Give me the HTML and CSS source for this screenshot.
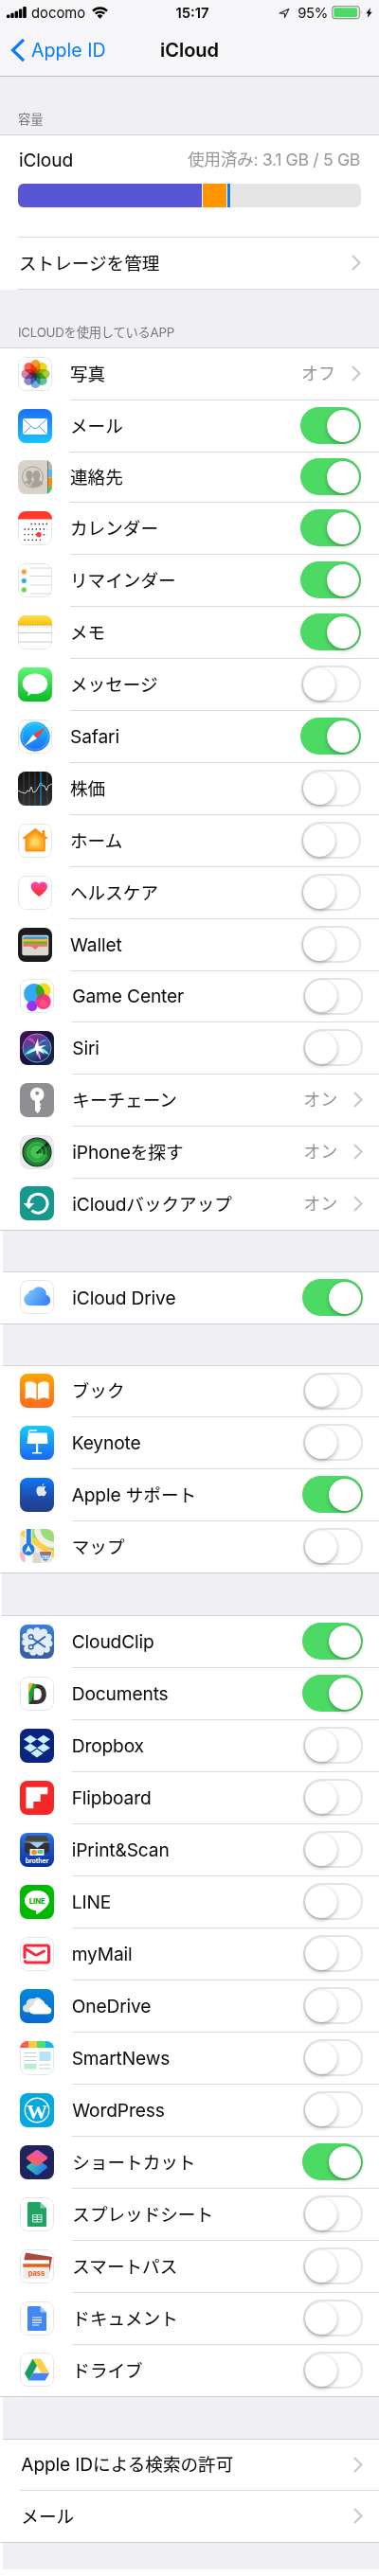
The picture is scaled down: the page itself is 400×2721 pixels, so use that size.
FILE: index.html
```html
<!DOCTYPE html>
<html lang="ja">
<head>
<meta charset="utf-8">
<title>iCloud</title>
<link rel="stylesheet" href="styles.css">
</head>
<body>
<svg class="defs" width="0" height="0">
  <defs>
    <linearGradient id="gMail" x2="0" y2="1"><stop stop-color="#1d6ff2"/><stop offset="1" stop-color="#19c5fb"/></linearGradient>
    <linearGradient id="gMsg" x2="0" y2="1"><stop stop-color="#5ff777"/><stop offset="1" stop-color="#08bb20"/></linearGradient>
    <linearGradient id="gSafari" x2="0" y2="1"><stop stop-color="#1cc5fa"/><stop offset="1" stop-color="#1d6cf0"/></linearGradient>
    <linearGradient id="gNote" x2="0" y2="1"><stop stop-color="#fddc55"/><stop offset="1" stop-color="#fcc404"/></linearGradient>
    <linearGradient id="gHeart" x2="0" y2="1"><stop stop-color="#fb4bb0"/><stop offset="1" stop-color="#fd2a1c"/></linearGradient>
    <linearGradient id="gStock" x2="0" y2="1"><stop stop-color="#111"/><stop offset="1" stop-color="#333"/></linearGradient>
    <linearGradient id="gSiri" x2="1" y2="1"><stop stop-color="#4b1064"/><stop offset=".5" stop-color="#15123d"/><stop offset="1" stop-color="#112f50"/></linearGradient>
    <linearGradient id="gOrb" x2=".3" y2="1"><stop stop-color="#a02c86"/><stop offset=".4" stop-color="#5a3c9c"/><stop offset=".65" stop-color="#2c6d9a"/><stop offset="1" stop-color="#1f2a66"/></linearGradient>
    <linearGradient id="gCloud" x1="0" x2="1" y2=".5"><stop stop-color="#83d6fb"/><stop offset="1" stop-color="#3c86fa"/></linearGradient>
    <linearGradient id="gBook" x2="0" y2="1"><stop stop-color="#fda503"/><stop offset="1" stop-color="#fb6c1c"/></linearGradient>
    <linearGradient id="gKey" x2="0" y2="1"><stop stop-color="#15cbfd"/><stop offset="1" stop-color="#1b65f2"/></linearGradient>
    <linearGradient id="gSup" x2="0" y2="1"><stop stop-color="#0c78f8"/><stop offset=".6" stop-color="#1c4ba9"/><stop offset="1" stop-color="#253e89"/></linearGradient>
    <linearGradient id="gClip" x2="0" y2="1"><stop stop-color="#3d80d6"/><stop offset="1" stop-color="#315f9e"/></linearGradient>
    <linearGradient id="gPrint" x2="0" y2="1"><stop stop-color="#2e70ed"/><stop offset="1" stop-color="#082f9d"/></linearGradient>
    <linearGradient id="gOne" x2="0" y2="1"><stop stop-color="#0587de"/><stop offset="1" stop-color="#066bcf"/></linearGradient>
    <linearGradient id="gScA" x1="0.7" y1="0" x2=".3" y2="1"><stop stop-color="#d953d6"/><stop offset=".5" stop-color="#f65a76"/><stop offset="1" stop-color="#f3665a"/></linearGradient>
    <linearGradient id="gScB" x2="1" y2=".3"><stop stop-color="#3bd0a6"/><stop offset="1" stop-color="#237ef0"/></linearGradient>
    <radialGradient id="gGreen"><stop stop-color="#4edb55"/><stop offset=".7" stop-color="#23983a"/><stop offset="1" stop-color="#176f28"/></radialGradient>
  </defs>
</svg>

<header class="top">
  <div class="status">
    <svg class="signal" viewBox="0 0 22 13"><g><rect x="0" y="8.5" width="3.4" height="3.5" rx="1"/><rect x="4.3" y="6.8" width="3.4" height="5.2" rx="1"/><rect x="8.6" y="4.8" width="3.4" height="7.2" rx="1"/><rect x="12.9" y="2.6" width="3.4" height="9.4" rx="1"/><rect x="17.2" y="0" width="3.6" height="12" rx="1"/></g></svg>
    <span class="carrier">docomo</span>
    <svg class="wifi" viewBox="0 0 17 13"><path d="M1 4.6a10.8 10.8 0 0 1 15 0M3.7 7.5a7 7 0 0 1 9.6 0" fill="none" stroke="#000" stroke-width="2.4"/><path d="M5.6 9.7a4.2 4.2 0 0 1 5.8 0l-2.9 3z"/></svg>
    <span class="time">15:17</span>
    <svg class="locate" viewBox="0 0 13 12"><path d="M1.2 6 11.8 1 7 11V6.4z" fill="none" stroke="#222" stroke-width="1.2" stroke-linejoin="round"/></svg>
    <span class="percent">95%</span>
    <svg class="battery" viewBox="0 0 33 15"><rect x=".7" y=".7" width="28.6" height="13" rx="3.2" fill="#fff" stroke="#929297" stroke-width="1.2"/><rect x="2.3" y="2.2" width="24.7" height="10" rx="1.4" fill="#4cd964"/><path d="M30.8 4.8q1.8 2.3 0 4.8z" fill="#929297"/></svg>
    <svg class="bolt" viewBox="0 0 8 12"><path d="M5.6 0 .4 6.8h2.8L2 12l5.6-7H4.7z"/></svg>
  </div>
  <nav class="nav">
    <a class="back"><svg viewBox="0 0 16 26"><path d="M14 1.8 2.5 13 14 24.2" fill="none" stroke="#0a7cfb" stroke-width="3.2"/></svg><span>Apple ID</span></a>
    <h1>iCloud</h1>
  </nav>
</header>

<main>
<h2 class="caption">容量</h2>
<section class="group">
  <div class="storage">
    <div class="usage"><span class="en">iCloud</span><span class="used">使用済み: 3.1 GB / 5 GB</span></div>
    <div class="meter"><i class="photos"></i><i class="backup"></i><i class="docs"></i><i class="free"></i></div>
  </div>
  <div class="row plain"><div class="cell">ストレージを管理<svg class="chev" viewBox="0 0 10 17"><path d="m1 1 7.6 7.5L1 16"/></svg></div></div>
</section>

<h2 class="caption apps">ICLOUDを使用しているAPP</h2>
<section class="group">
  <div class="row"><svg class="icon" viewBox="0 0 36 36"><rect class="edge" x=".5" y=".5" width="35" height="35" rx="7.5"/>
    <g class="petals"><rect x="13.5" y="3" width="10" height="15" rx="5" fill="#fb9a26"/><rect x="13.5" y="3" width="10" height="15" rx="5" fill="#e8d80d" transform="rotate(45 18.5 18)"/><rect x="13.5" y="3" width="10" height="15" rx="5" fill="#a5d141" transform="rotate(90 18.5 18)"/><rect x="13.5" y="3" width="10" height="15" rx="5" fill="#66bf88" transform="rotate(135 18.5 18)"/><rect x="13.5" y="3" width="10" height="15" rx="5" fill="#6daee2" transform="rotate(180 18.5 18)"/><rect x="13.5" y="3" width="10" height="15" rx="5" fill="#9484c4" transform="rotate(225 18.5 18)"/><rect x="13.5" y="3" width="10" height="15" rx="5" fill="#d084b0" transform="rotate(270 18.5 18)"/><rect x="13.5" y="3" width="10" height="15" rx="5" fill="#f8604f" transform="rotate(315 18.5 18)"/></g></svg>
    <div class="cell">写真<span class="value">オフ</span><svg class="chev" viewBox="0 0 10 17"><path d="m1 1 7.6 7.5L1 16"/></svg></div></div>
  <div class="row"><svg class="icon" viewBox="0 0 36 36"><rect width="36" height="36" fill="url(#gMail)"/><rect x="5" y="10" width="26" height="17" rx="2" fill="#fff"/><path d="m5.7 10.7 9.6 9q2.7 2.3 5.4 0l9.6-9M5.7 26.3l8-8M30.3 26.3l-8-8" fill="none" stroke="#2f96f5" stroke-width=".9"/></svg>
    <div class="cell">メール<span class="switch on"></span></div></div>
  <div class="row h53"><svg class="icon" viewBox="0 0 36 36"><rect width="36" height="36" fill="#d7d3ca"/><path d="M31.5 0H36v10h-4.500z" fill="#b8b4ab"/><path d="M32 10h4v8h-4z" fill="#5bb8f3"/><path d="M32 18.500h4V28h-4z" fill="#fb8b08"/><path d="M32 28h4v8h-4z" fill="#3bd758"/><path d="M31.500 0v36" stroke="#77736d" stroke-width="1"/><circle cx="15.500" cy="18" r="11" fill="none" stroke="#a19b95" stroke-width="1"/><path d="M6 24.500q1-2 4-2.700l.4-1.600C7 16.500 8 11 12 11s4.600 6 2.300 9l.3 1.800 1 .5 1.200-.5.2-1.800c-2.200-3-1.400-9 2.600-9s4.800 6 2.600 9l.4 1.800q3 1 4 2.200-2 4-7.500 4.800-5 .8-9.100-4.300z" fill="#a7a19b"/><path d="M13 27q0-3 3-4.500" fill="none" stroke="#d7d3ca"/></svg>
    <div class="cell">連絡先<span class="switch on"></span></div></div>
  <div class="row"><svg class="icon" viewBox="0 0 36 36"><rect class="edge" x=".5" y=".5" width="35" height="35" rx="7.500"/><rect width="36" height="8.500" fill="#fe3a2f"/><path d="M13.500 13.500H31M6.500 19H31M6.500 24.700H31M6.500 30.300H24" stroke="#222" stroke-width="1.300" stroke-dasharray="1.300 2.750"/><circle cx="22" cy="24.700" r="2.700" fill="#fd3b32"/></svg>
    <div class="cell">カレンダー<span class="switch on"></span></div></div>
  <div class="row"><svg class="icon" viewBox="0 0 36 36"><rect class="edge" x=".5" y=".5" width="35" height="35" rx="7.500"/><path d="M12.500 5H36M12.500 13.500H36M12.500 23H36M12.500 32H36" stroke="#d3d3d3" stroke-width=".9"/><g stroke-width="1.500" stroke-opacity=".45"><circle cx="6.300" cy="9" r="2.500" fill="#fb9a1f" stroke="#fdc67c"/><circle cx="6.300" cy="18.500" r="2.500" fill="#23a7f2" stroke="#88cdf5"/><circle cx="6.300" cy="28" r="2.500" fill="#65d32d" stroke="#a4e282"/></g></svg>
    <div class="cell">リマインダー<span class="switch on"></span></div></div>
  <div class="row"><svg class="icon" viewBox="0 0 36 36"><rect class="edge" x=".5" y=".5" width="35" height="35" rx="7.500"/><rect width="36" height="10" fill="url(#gNote)"/><path d="M0 12h36" stroke="#b5b5b5" stroke-width="1.200" stroke-dasharray="1 1.500"/><path d="M0 10.200h36" stroke="#c69f26" stroke-width=".7"/><path d="M0 18.500h36M0 28h36" stroke="#c9c9c9"/></svg>
    <div class="cell">メモ<span class="switch on"></span></div></div>
  <div class="row"><svg class="icon" viewBox="0 0 36 36"><rect width="36" height="36" fill="url(#gMsg)"/><path d="M18 6.500c7.500 0 13.300 4.700 13.300 10.700S25.500 28 18 28q-2 0-4-.5-2 2.300-4.500 2.300 1.300-1.500 1.300-3.600C7 24 4.700 21 4.700 17.200 4.700 11.200 10.500 6.500 18 6.500z" fill="#fff"/></svg>
    <div class="cell">メッセージ<span class="switch"></span></div></div>
  <div class="row"><svg class="icon" viewBox="0 0 36 36"><rect class="edge" x=".5" y=".5" width="35" height="35" rx="7.500"/><circle cx="18" cy="18" r="15.700" fill="url(#gSafari)"/><circle cx="18" cy="18" r="13.700" fill="none" stroke="#8cd2fb" stroke-width="1.400" stroke-dasharray=".5 1"/><path d="M29 8 16 16l4 4z" fill="#fc3b32"/><path d="m7 28 9-12 4 4z" fill="#fff"/></svg>
    <div class="cell"><span class="en">Safari</span><span class="switch on"></span></div></div>
  <div class="row"><svg class="icon" viewBox="0 0 36 36"><rect width="36" height="36" fill="url(#gStock)"/><path d="M6 0v36M12 0v36M18 0v36M31 0v36" stroke="#555" stroke-width=".7"/><path d="M24 0v36" stroke="#1489cc" stroke-width="1.300"/><path d="m0 20 4 2 4 1 2-3 2 1 2-5 2 6 3-1 2-4 3-4 2 2h2l2 5 2-5 4-2" fill="none" stroke="#e4e4e4" stroke-width=".9"/><circle cx="24" cy="13" r="1.700" fill="#17a0ee"/></svg>
    <div class="cell">株価<span class="switch"></span></div></div>
  <div class="row"><svg class="icon" viewBox="0 0 36 36"><rect class="edge" x=".5" y=".5" width="35" height="35" rx="7.500"/><path d="M25.500 7h2.800v8h-2.800z" fill="#f98a13"/><path d="M18.200 4.800 31.500 15l-1 1.200h-1.700V28q0 1.500-1.500 1.500H9Q7.500 29.500 7.500 28V16.200H6L4.800 15z" fill="#fb9014"/><path d="M18.200 8.500 27 15.300V27.600H9.500V15.300z" fill="#fca828"/><path d="m18.200 11.700 6.200 4.700v8.900H12v-8.900z" fill="#fdbe42"/><path d="m18.200 14.500 4 3v5.300h-8v-5.300z" fill="#fdd562"/></svg>
    <div class="cell">ホーム<span class="switch"></span></div></div>
  <div class="row"><svg class="icon" viewBox="0 0 36 36"><rect class="edge" x=".5" y=".5" width="35" height="35" rx="7.500"/><path d="M22.300 22C17 18 13.700 14.800 13.700 11.200c0-4.700 6-6.200 8.600-2.700 2.600-3.500 8.600-2 8.600 2.700 0 3.600-3.300 6.800-8.600 10.800z" fill="url(#gHeart)"/></svg>
    <div class="cell">ヘルスケア<span class="switch"></span></div></div>
  <div class="row"><svg class="icon" viewBox="0 0 36 36"><rect width="36" height="36" fill="#1c1b1b"/><rect x="4.300" y="7.700" width="28" height="21.500" rx="2" fill="#dcd8d0"/><rect x="5.500" y="9.300" width="25.500" height="4" rx="1" fill="#3f9bd1"/><path d="M5.500 12h25.500v3H5.500z" fill="#fab22f"/><path d="M5.500 14.500h25.500v3H5.500z" fill="#62b23f"/><path d="M5.500 17.200h25.500v2.600h-8.500q-1 0-1.700 1-1.200 2-2.600 2t-2.600-2q-.7-1-1.700-1H5.500z" fill="#f2705f"/></svg>
    <div class="cell"><span class="en">Wallet</span><span class="switch"></span></div></div>
  <div class="row h54 s3"><svg class="icon" viewBox="0 0 36 36"><rect class="edge" x=".5" y=".5" width="35" height="35" rx="7.500"/><circle cx="25" cy="12" r="7.600" fill="#f5dc13"/><circle cx="15" cy="15.700" r="10.800" fill="#31a9f4"/><path d="M19.500 6a10.800 10.800 0 0 1 5.800 13.500 7.600 7.600 0 0 1-5.800-13.500z" fill="#38a422"/><circle cx="12.800" cy="28.600" r="5.600" fill="#9834f0"/><circle cx="24.700" cy="24" r="8" fill="#fb348d"/><path d="M17.300 21a8 8 0 0 1 8-4.500q-1.500 6-8 4.500z" fill="#b94a62"/><circle cx="25" cy="26" r="4" fill="#fd5278"/></svg>
    <div class="cell"><span class="en">Game Center</span><span class="switch"></span></div></div>
  <div class="row s3"><svg class="icon" viewBox="0 0 36 36"><rect width="36" height="36" fill="url(#gSiri)"/><circle cx="18" cy="18" r="15" fill="url(#gOrb)" stroke="#9aa0c4" stroke-width=".9"/><path d="M18 17Q13 4 8 9q5 1 10 8z" fill="#e24aac"/><path d="M18 17q5-11 11-7-6 1-11 7z" fill="#4a9ae0"/><path d="M18 18q-7-1-13 7 8-1 13-7z" fill="#63e6dc"/><path d="M18 18q4 7 4 13-5-5-4-13z" fill="#f77bd0"/><path d="M18 17q8 0 13 8-8-2-13-8z" fill="#7af4e6"/><path d="m19 8 .8 8 8-1-6 3.500 4 6-6-3.500-1.800 5-1-5.500-8 3 6-5z" fill="#fff"/></svg>
    <div class="cell"><span class="en">Siri</span><span class="switch"></span></div></div>
  <div class="row s3"><svg class="icon" viewBox="0 0 36 36"><rect width="36" height="36" fill="#8e8e93"/><circle cx="18.200" cy="12" r="7.300" fill="#fff"/><circle cx="18.200" cy="10.700" r="2" fill="#8e8e93"/><path d="M16 17h5v4l1.500 1.500-1.500 2 1.500 2-1.500 1.800v1.200l-2.300 2.500L16 29z" fill="#fff"/></svg>
    <div class="cell">キーチェーン<span class="value">オン</span><svg class="chev" viewBox="0 0 10 17"><path d="m1 1 7.600 7.500L1 16"/></svg></div></div>
  <div class="row s3"><svg class="icon" viewBox="0 0 36 36"><rect class="edge gray" x=".5" y=".5" width="35" height="35" rx="7.500"/><circle cx="18" cy="18" r="15" fill="url(#gGreen)" stroke="#202a22" stroke-width="1.200"/><path d="M18 18 29 8a14.500 14.500 0 0 1 3 14z" fill="#13682a"/><path d="M18 18 28.500 7.500l2 3z" fill="#0c2f14"/><circle cx="18" cy="18" r="10" fill="none" stroke="#60c865" stroke-width=".7"/><circle cx="18" cy="18" r="5.500" fill="none" stroke="#70dc73" stroke-width=".7"/><circle cx="18.500" cy="18.500" r="1.300" fill="#0b3314"/></svg>
    <div class="cell"><span class="en">iPhone</span>を探す<span class="value">オン</span><svg class="chev" viewBox="0 0 10 17"><path d="m1 1 7.600 7.500L1 16"/></svg></div></div>
  <div class="row s3 last"><svg class="icon" viewBox="0 0 36 36"><rect width="36" height="36" fill="#17988d"/><path d="M9 18.500a10 10 0 1 1 3.400 7.200" fill="none" stroke="#fff" stroke-width="3"/><path d="M3.800 18h11.400l-5.700 6z" fill="#fff"/></svg>
    <div class="cell"><span class="en">iCloud</span>バックアップ<span class="value">オン</span><svg class="chev" viewBox="0 0 10 17"><path d="m1 1 7.600 7.500L1 16"/></svg></div></div>
</section>

<div class="gap w3"></div>
<section class="group">
  <div class="row s3 last"><svg class="icon" viewBox="0 0 36 36"><rect class="edge" x=".5" y=".5" width="35" height="35" rx="7.500"/><path d="M9.500 27a6.500 6.500 0 0 1-.8-12.500q.8-4.300 5-3.500a7.600 7.600 0 0 1 14 4.700A5.800 5.800 0 0 1 27.500 27z" fill="url(#gCloud)"/></svg>
    <div class="cell"><span class="en">iCloud Drive</span><span class="switch on"></span></div></div>
</section>

<div class="gap w3"></div>
<section class="group">
  <div class="row h54 s2"><svg class="icon" viewBox="0 0 36 36"><rect width="36" height="36" fill="url(#gBook)"/><path d="M17.400 11.500v16.300q-5.500-4.500-11.700-1V10.500q0-1 1-1.500 7-2.300 10.700 2.500zM18.900 11.500v16.300q5.500-4.500 11.700-1V10.500q0-1-1-1.500-7-2.300-10.700 2.500z" fill="#fff"/></svg>
    <div class="cell">ブック<span class="switch"></span></div></div>
  <div class="row s2"><svg class="icon" viewBox="0 0 36 36"><rect width="36" height="36" fill="url(#gKey)"/><path d="M9 7.500h19.500l1 10.500q0 1-1 1H8.500q-1 0-1-1zM17 19h2.200v9H17zM13 28h10v1.500H13z" fill="#fff"/><path d="M9.500 9V6q0-1 1-1H18" fill="none" stroke="#fff" stroke-width="1.300"/></svg>
    <div class="cell"><span class="en">Keynote</span><span class="switch"></span></div></div>
  <div class="row s2"><svg class="icon" viewBox="0 0 36 36"><rect width="36" height="36" fill="url(#gSup)"/><path d="M23.800 9q1.700-.9 3.600 0-2 1.500-1.200 3.500.5 1 1.800 1.700-1 2.800-2.200 3.500-1 .4-2-.2-.800-.3-1.700.1-1 .5-1.900-.1-2.300-2.300-1.900-5.500.7-3.800 4-3.300z M23.600 8.300q0-2 2-2.700.2 2-2 2.700z" transform="translate(-.3 .8) translate(24 12) scale(1.120) translate(-24 -12)" fill="#e3e8f1"/></svg>
    <div class="cell"><span class="en">Apple </span>サポート<span class="switch on"></span></div></div>
  <div class="row s2 last"><svg class="icon" viewBox="0 0 36 36"><rect width="36" height="36" fill="#eee9df"/><path d="M13 0h23v26L13 15z" fill="#99dc78"/><path d="M18 0q2 15 18 17" fill="none" stroke="#f2eee8" stroke-width="6.500"/><path d="M0 6 36 31v-7L0-1z" fill="#fdd043"/><path d="M0 24q10 0 12 12H0z" fill="#f7b9cb"/><path d="M5.500 0h7v36h-7z" fill="#fff"/><path d="M6.800 0h5v20h-5z" fill="#2680e1"/><path d="M14 25h8v11h-8z" fill="#dcd8cd"/><circle cx="9" cy="21.500" r="6.500" fill="#1f7de1"/><path d="m9 17 3.500 8L9 23l-3.500 2z" fill="#fff"/><path d="M20.500 24h13v2q-2 7-6.500 8.500-5-1.500-6.500-8.500z" fill="#4891d6" stroke="#fff" stroke-width=".8"/><path d="M21 24h12v2.500H21z" fill="#df584a"/><text x="27" y="32" class="shield">280</text></svg>
    <div class="cell">マップ<span class="switch"></span></div></div>
</section>

<div class="gap w2 tall"></div>
<section class="group">
  <div class="row s2"><svg class="icon" viewBox="0 0 36 36"><rect width="36" height="36" fill="url(#gClip)"/><g fill="#e4ecf7"><circle cx="18" cy="18" r="12.500"/><circle cx="18" cy="6.500" r="3.500"/><circle cx="25" cy="8.500" r="4"/><circle cx="30" cy="13.500" r="3.700"/><circle cx="31" cy="20" r="3.500"/><circle cx="28" cy="26" r="3.800"/><circle cx="21.500" cy="29" r="3.800"/><circle cx="14" cy="29" r="3.800"/><circle cx="8" cy="25.500" r="3.800"/><circle cx="5.500" cy="19" r="3.300"/><circle cx="6" cy="12.500" r="3.500"/><circle cx="11" cy="8" r="3.800"/></g><path d="m13 14.500 14 9.500M13 22.500l14-10" stroke="#3268ae" stroke-width="2"/><circle cx="11.700" cy="13" r="2.300" fill="none" stroke="#3268ae" stroke-width="1.500"/><circle cx="11.700" cy="23.800" r="2.300" fill="none" stroke="#3268ae" stroke-width="1.500"/></svg>
    <div class="cell"><span class="en">CloudClip</span><span class="switch on"></span></div></div>
  <div class="row s2"><svg class="icon" viewBox="0 0 36 36"><rect class="edge" x=".5" y=".5" width="35" height="35" rx="7.500"/><text x="8" y="28.500" class="dmark">D</text><path d="M9.500 7h5L9.500 20z" fill="#fdb913"/><path d="m14 7 4 2-2.500 4-3 12-2.900 3V17z" fill="#12a332"/></svg>
    <div class="cell"><span class="en">Documents</span><span class="switch on"></span></div></div>
  <div class="row s2"><svg class="icon" viewBox="0 0 36 36"><rect width="36" height="36" fill="#0c2481"/><path d="m11 6.700 7 4.500-7 4.500-7-4.500zM25 6.700l7 4.500-7 4.500-7-4.500zM11 15.700l7 4.500-7 4.500-7-4.500zM25 15.700l7 4.500-7 4.500-7-4.500zM18 21.500l6.500 4.500-6.500 4.500-6.500-4.500z" fill="#c9f1fd"/></svg>
    <div class="cell"><span class="en">Dropbox</span><span class="switch"></span></div></div>
  <div class="row s2"><svg class="icon" viewBox="0 0 36 36"><rect width="36" height="36" fill="#f52828"/><path d="M6.500 6.700h22.800v7.600h-7.600v7.600h-7.400v7.400H6.500z" fill="#fff"/></svg>
    <div class="cell"><span class="en">Flipboard</span><span class="switch"></span></div></div>
  <div class="row s2"><svg class="icon" viewBox="0 0 36 36"><rect width="36" height="36" fill="url(#gPrint)"/><path d="M7.500 3h20.500l2.500 6H5z" fill="#454545"/><path d="M5 10.500h26v9l-2 2H7l-2-2z" fill="#303236"/><path d="M5 8.800h26v1.600H5z" fill="#777"/><path d="M10 10h16l-7.500 6z" fill="#9ed1fb"/><path d="M10.500 17h15v7h-15z" fill="#eef4e8"/><circle cx="15" cy="20.500" r="2.800" fill="#ef8d27"/><path d="M18.500 18h5.500v4h-5.500z" fill="#5bc5a4"/><text x="18" y="31.500" class="brother">brother</text></svg>
    <div class="cell"><span class="en">iPrint&amp;Scan</span><span class="switch"></span></div></div>
  <div class="row s2"><svg class="icon" viewBox="0 0 36 36"><rect width="36" height="36" fill="#00b900"/><path d="M18 5.700c7.200 0 13 4.600 13 10.700 0 5.500-6.500 10.500-13 14.500-1.300.7-.8-1.700-.9-4C10.500 26.500 5 22 5 16.400 5 10.300 10.800 5.700 18 5.700z" fill="#fff"/><text x="18.200" y="19.500" class="linelogo">LINE</text></svg>
    <div class="cell"><span class="en">LINE</span><span class="switch"></span></div></div>
  <div class="row s2"><svg class="icon" viewBox="0 0 36 36"><rect class="edge" x=".5" y=".5" width="35" height="35" rx="7.500"/><path d="M5 21.500V11q0-2 2-2h21.500q2 0 2 2v14q0 2-2 2H7.500q-2 0-2-1.500M6 12.500l9.500 6q2 1 3.500 0l6.500-3.500" fill="none" stroke="#fc263b" stroke-width="3" stroke-linecap="round" stroke-linejoin="round"/></svg>
    <div class="cell"><span class="en">myMail</span><span class="switch"></span></div></div>
  <div class="row s2"><svg class="icon" viewBox="0 0 36 36"><rect width="36" height="36" fill="url(#gOne)"/><path d="M8 24.500q-5 0-5-4.300 0-3.500 3.500-4Q7 10 12.500 10h3q4-3 7 1l5 6v7.500z" fill="#dce1e6"/><path d="M14.500 26.500q-4.500-.5-4.500-4.500t4.200-4.500q.5-6 5.800-6.500 5-.3 6.500 5 3 0 3.500 3 3.500.8 3.300 4-.3 3.500-4.500 3.500z" fill="#fff"/></svg>
    <div class="cell"><span class="en">OneDrive</span><span class="switch"></span></div></div>
  <div class="row s2"><svg class="icon" viewBox="0 0 36 36"><rect class="edge" x=".5" y=".5" width="35" height="35" rx="7.500"/><path d="M0 0h9.500v7H0z" fill="#fb5a57"/><path d="M9.300 0h9v7h-9z" fill="#fdca36"/><path d="M18 0h9v7h-9z" fill="#4fdc70"/><path d="M27 0h9v7h-9z" fill="#13b8ea"/><path d="M4.500 12.500h13M4.500 16.500h13M4.500 20.500h13M20 25h12.500M20 29h12.500" stroke="#bfd0db"/><path d="M20.500 11h12v10h-12z" fill="#b5e5f6"/><path d="M4.500 24h13v5.500h-13z" fill="#b5efce"/></svg>
    <div class="cell"><span class="en">SmartNews</span><span class="switch"></span></div></div>
  <div class="row s3"><svg class="icon" viewBox="0 0 36 36"><rect width="36" height="36" fill="#06a8df"/><circle cx="18" cy="18" r="12.700" fill="none" stroke="#fff" stroke-width="1.400"/><text x="18" y="26.500" class="wp">W</text></svg>
    <div class="cell"><span class="en">WordPress</span><span class="switch"></span></div></div>
  <div class="row s3"><svg class="icon" viewBox="0 0 36 36"><rect width="36" height="36" fill="#1e245e"/><path d="m18 14.500 10 7q2 1.500 0 3l-8 6.200q-2 1.200-4 0l-8-6.200q-2-1.500 0-3z" fill="url(#gScB)"/><path d="M16.200 5.700q2-1.400 4 0l8.200 6q1.800 1.500 0 3l-8.400 6.200q-2 1.300-4 0l-8.200-6q-2-1.600 0-3.100z" fill="url(#gScA)"/></svg>
    <div class="cell">ショートカット<span class="switch on"></span></div></div>
  <div class="row s3"><svg class="icon" viewBox="0 0 36 36"><rect class="edge" x=".5" y=".5" width="35" height="35" rx="7.500"/><path d="M9.500 5h12l6.500 6.500V30q0 1-1 1H9q-1 0-1-1V6.500Q8 5 9.500 5z" fill="#1fa462"/><path d="M21.500 5v6.500H28z" fill="#8bd0ad"/><path d="M13.500 18.500h9.500v7.500h-9.500zM13.500 21h9.500M13.500 23.500h9.500M18.200 18.500V26" fill="none" stroke="#d6f0e3"/></svg>
    <div class="cell">スプレッドシート<span class="switch"></span></div></div>
  <div class="row s3"><svg class="icon" viewBox="0 0 36 36"><rect class="edge" x=".5" y=".5" width="35" height="35" rx="7.500"/><path d="m6 3.500 28 4.500-3 17L4 13z" fill="#ab493d"/><path d="M3.300 11.500H31v19.500H3.300z" fill="#eee"/><path d="M3.300 11.500H31V15H3.300z" fill="#fff"/><path d="M3.300 15.200H31v3.500H3.300z" fill="#ee5c1b"/><text x="17.500" y="27.500" class="pass">pass</text></svg>
    <div class="cell">スマートパス<span class="switch"></span></div></div>
  <div class="row s3"><svg class="icon" viewBox="0 0 36 36"><rect class="edge" x=".5" y=".5" width="35" height="35" rx="7.500"/><path d="M9.500 5h12l6.500 6.500V30q0 1-1 1H9q-1 0-1-1V6.500Q8 5 9.500 5z" fill="#4387f4"/><path d="M21.500 5v6.500H28z" fill="#a5c8fb"/><path d="M13 17h10M13 19.700h10M13 22.300h10M13 25h7" stroke="#eef4fe" stroke-width="1.200"/></svg>
    <div class="cell">ドキュメント<span class="switch"></span></div></div>
  <div class="row s3 last"><svg class="icon" viewBox="0 0 36 36"><rect class="edge" x=".5" y=".5" width="35" height="35" rx="7.500"/><path d="M13.500 6.500h8.700l8.800 15h-8.500z" fill="#ffcf48"/><path d="M13.500 6.500 18 14 9.500 29.500 5 22z" fill="#15a05d"/><path d="M13.800 21.700H31l-4.300 7.800H9.500z" fill="#4485f4"/></svg>
    <div class="cell">ドライブ<span class="switch"></span></div></div>
</section>

<div class="gap w3 tall"></div>
<section class="group">
  <div class="row plain h54 s3"><div class="cell"><span class="en">Apple ID</span>による検索の許可<svg class="chev" viewBox="0 0 10 17"><path d="m1 1 7.600 7.500L1 16"/></svg></div></div>
  <div class="row plain s3 last"><div class="cell">メール<svg class="chev" viewBox="0 0 10 17"><path d="m1 1 7.600 7.500L1 16"/></svg></div></div>
</section>
<div class="gap w3 foot"></div>
</main>
</body>
</html>
```

FILE: styles.css
```css
* { box-sizing: border-box; }
html { background: #fff; }
body {
  margin: 0;
  width: 400px;
  height: 2721px;
  background: #fff;
  color: #0a0a0a;
  font: 18.6px/24px Inter, "Noto Sans CJK JP", sans-serif;
  overflow: hidden;
}
svg { display: block; flex: none; }
.defs { position: absolute; }
.en { font-size: 19.2px; letter-spacing: -0.15px; white-space: pre; }

/* status and navigation bars */
.top { height: 81px; background: #f6f6f8; border-bottom: 1px solid #bcbcc1; }
.status {
  display: grid;
  grid-template-columns: 22px 58px 97px 38px 1fr 37px 37px 10px;
  align-items: center;
  height: 27px;
  padding: 0 6px 0 7px;
  font-size: 14.8px;
}
.signal { width: 22px; height: 13px; }
.carrier { padding-left: 4px; }
.wifi { width: 17px; height: 13px; margin-left: 10px; }
.time { font-weight: 600; text-align: center; }
.locate { width: 12px; height: 12px; justify-self: end; margin-right: 4px; }
.percent { letter-spacing: -0.3px; text-align: right; padding-right: 1px; }
.battery { width: 33px; height: 15px; margin-left: 3px; }
.bolt { width: 7px; height: 11px; margin-left: 2px; }
.nav {
  display: grid;
  grid-template-columns: 1fr auto 1fr;
  align-items: center;
  height: 51px;
  padding: 0 11px;
}
.back { display: flex; align-items: center; gap: 6px; color: #0a7cfb; font-size: 19.6px; }
.back svg { width: 16px; height: 26px; }
.nav h1 { margin: 0; font-size: 20px; font-weight: 600; }

/* section headings and spacers */
.caption {
  margin: 0;
  height: 62px;
  padding: 34px 19px 0;
  background: #efeff4;
  border-bottom: 1px solid #d4d4d8;
  color: #77777c;
  font-size: 13.3px;
  font-weight: 400;
  line-height: 22px;
}
.caption.apps { letter-spacing: -0.25px; }
.gap {
  height: 44px;
  margin-left: 3px;
  background: #efeff4;
  border-bottom: 1px solid #d4d4d8;
}
.gap.w2 { margin-left: 2px; }
.gap.tall { height: 45px; }
.gap.foot { height: 28px; border: 0; }

/* rows */
.row { --dx: 0px; display: flex; align-items: center; height: 55px; padding-left: calc(19px + var(--dx)); }
.row.h53 { height: 53px; }
.row.h54 { height: 54px; }
.row.s2 { --dx: 1.7px; }
.row.s3 { --dx: 2.3px; }
.icon { width: 36px; height: 36px; margin-bottom: 2px; border-radius: 8px; overflow: hidden; }
.edge { fill: #fff; stroke: #e6e6e6; stroke-width: 1; }
.edge.gray { fill: #ececf0; }
.petals { mix-blend-mode: multiply; isolation: isolate; }
.petals rect { mix-blend-mode: multiply; }
.cell {
  flex: 1;
  display: flex;
  align-items: center;
  align-self: stretch;
  margin-left: 19px;
  padding-right: calc(19px - var(--dx));
  padding-bottom: 1px;
  border-bottom: 1px solid #dadadc;
  white-space: pre;
}
.last { border-bottom: 1px solid #d0d0d4; }
.last .cell { border-bottom: 0; }
.plain .cell { margin-left: 0; padding-left: 1px; }
.chev { width: 10px; height: 17px; margin-left: auto; fill: none; stroke: #c7c7cc; stroke-width: 2; }
.value { margin-left: auto; color: #929297; font-size: 18px; }
.value + .chev { margin-left: 17px; }

.switch {
  display: flex;
  width: 63px;
  height: 39px;
  margin-left: auto;
  padding: 2.5px 2px;
  border-radius: 20px;
  box-shadow: inset 0 0 0 2px #e4e4e5;
}
.switch::after {
  content: "";
  width: 34px;
  height: 34px;
  border-radius: 50%;
  background: #fff;
  box-shadow: 0 2px 4px rgba(0, 0, 0, .28), 0 0 1px rgba(0, 0, 0, .2);
}
.switch.on { width: 64px; justify-content: flex-end; background: #4cd964; box-shadow: none; }

/* storage meter */
.storage { height: 108px; margin-left: 19px; border-bottom: 1px solid #dadadc; padding: 14px 19px 0 0; }
.usage { display: flex; justify-content: space-between; padding: 0 1px 0 1px; }
.used { color: #98989c; font-size: 17.8px; letter-spacing: -0.4px; }
.meter { display: flex; gap: 1px; height: 25px; margin-top: 13px; border-radius: 6px; overflow: hidden; }
.photos { width: 193.5px; background: #5856d6; }
.backup { width: 25.5px; background: #ff9500; }
.docs { width: 2.5px; background: #0a7cfb; }
.free { flex: 1; background: #e5e5e5; }

/* lettering inside icons */
.icon text { text-anchor: middle; font-family: Inter, sans-serif; }
.icon .dmark { text-anchor: start; font-size: 29px; font-weight: 800; fill: #333; }
.icon .brother { font-size: 7px; font-weight: 700; fill: #fff; letter-spacing: -.1px; }
.icon .linelogo { font-size: 7.6px; font-weight: 800; fill: #00b900; }
.icon .pass { font-size: 7.5px; font-weight: 700; fill: #ee5c1b; }
.icon .wp { font: 700 22px "Liberation Serif", serif; fill: #fff; }
.icon .shield { font-size: 4.5px; font-weight: 700; fill: #fff; }
```
